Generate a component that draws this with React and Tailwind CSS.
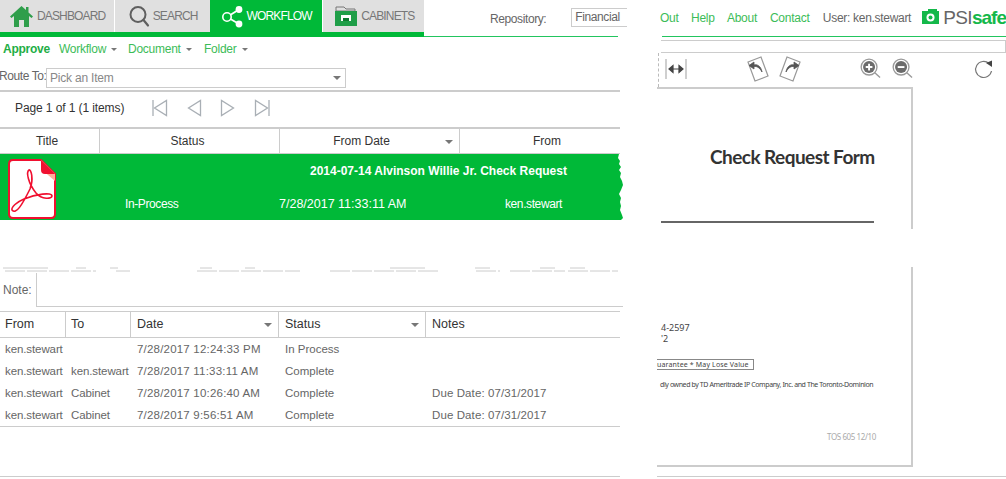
import React from "react";

const font = { sans: "font-['Liberation_Sans',Arial,sans-serif]" };

const HomeIcon = () => (
  <svg width="25" height="24" viewBox="0 0 25 24" className="shrink-0">
    <path d="M12.5 2 L1 12.5 L2.5 14 L5 12 V23 H10 V16 H15 V23 H20 V12 L22.5 14 L24 12.5 L19.5 8.5 V3 H17 V6 Z" fill="#2f9e4b" />
  </svg>
);

const SearchIcon = () => (
  <svg width="22" height="24" viewBox="0 0 22 24" className="shrink-0">
    <circle cx="10" cy="10.5" r="7.5" fill="none" stroke="#5f5f5f" strokeWidth="2" />
    <path d="M15.5 16 L20 21.5" stroke="#5f5f5f" strokeWidth="2.2" strokeLinecap="round" />
  </svg>
);

const ShareIcon = () => (
  <svg width="23" height="23" viewBox="0 0 23 23" className="shrink-0">
    <path d="M6 12 L18 4.5 M6 12 L18 19" stroke="#fff" strokeWidth="1.8" />
    <circle cx="6" cy="12" r="4.2" fill="#00b938" stroke="#fff" strokeWidth="1.6" />
    <circle cx="18" cy="4.5" r="3.4" fill="#fff" />
    <circle cx="18" cy="19" r="3.4" fill="#fff" />
  </svg>
);

const CabinetIcon = () => (
  <svg width="24" height="22" viewBox="0 0 24 22" className="shrink-0">
    <path d="M2 4 V2 H10 L12 4 H21 V6 H2 Z" fill="none" stroke="#777" strokeWidth="1" />
    <rect x="1" y="6" width="22" height="15" fill="#1f9e48" />
    <rect x="7" y="10" width="10" height="6" fill="#fff" />
    <rect x="9" y="13" width="6" height="3" fill="#0d7a30" />
  </svg>
);

const PdfIcon = () => (
  <svg width="48" height="60" viewBox="0 0 48 60" className="shrink-0">
    <path d="M5 1 H33 L47 15 V55 Q47 59 43 59 H5 Q1 59 1 55 V5 Q1 1 5 1 Z" fill="#fff" stroke="#f01030" strokeWidth="2" />
    <path d="M33 1 L47 15 L47 22 L33 10 Z" fill="#ffb09a" />
    <path d="M33 1 L47 15 H37 Q33 15 33 11 Z" fill="#f01030" />
    <path d="M4 51 C8 56 14 46 22 30 C26 20 23 10 21 11 C18 13 20 24 28 34 C34 41 44 40 44 37 C44 33 28 35 16 40 C9 43 3 48 4 51 Z" fill="none" stroke="#f01030" strokeWidth="1.6" />
  </svg>
);

const PagerIcon = ({ dir, bar }) => (
  <svg width="16" height="18" viewBox="0 0 16 18" fill="none" stroke="#a9afb5" strokeWidth="1.3" className="shrink-0">
    {dir === "left" ? <path d="M14.5 1.5 V16.5 L2.5 9 Z" /> : <path d="M1.5 1.5 V16.5 L13.5 9 Z" />}
    {bar && <path d={dir === "left" ? "M1 1 V17" : "M15 1 V17"} />}
  </svg>
);

const Caret = ({ className = "" }) => (
  <span className={`inline-block w-0 h-0 border-x-[4px] border-x-transparent border-t-[4px] border-t-[#777] ${className}`} />
);

const SmallCaret = () => (
  <span className="inline-block w-0 h-0 ml-[2px] mb-[2px] border-x-[3px] border-x-transparent border-t-[3px] border-t-[#777]" />
);

const RaggedEdge = () => (
  <svg width="8" height="66" viewBox="0 0 8 66" className="absolute left-full top-0">
    <path d="M0 0 H1 L0 4 L2 7 L1 10 L3 13 L1 16 L3 19 L2 23 L4 27 L5 31 L3 36 L1 40 L3 44 L2 48 L3 52 L2 56 L4 61 L5 64 L3 66 H0 Z" fill="#00b938" />
  </svg>
);

const ZoomIcon = ({ plus }) => (
  <svg width="21" height="21" viewBox="0 0 22 22" className="shrink-0">
    <circle cx="9.5" cy="9.5" r="8.3" fill="#fff" stroke="#999" strokeWidth="1.4" />
    <circle cx="9.5" cy="9.5" r="6.3" fill="#6b6b6b" />
    <path d={plus ? "M9.5 6 V13 M6 9.5 H13" : "M6 9.5 H13"} stroke="#fff" strokeWidth="2" />
    <path d="M15.5 15.5 L21 20.5" stroke="#999" strokeWidth="1.4" />
  </svg>
);

const RotatePage = ({ flip }) => (
  <svg width="22" height="26" viewBox="0 0 22 26" className={`shrink-0 ${flip ? "-scale-x-100" : ""}`}>
    <path d="M1 6 L14 1 L21 20 L8 25 Z" fill="#fff" stroke="#999" strokeWidth="1.2" />
    <path d="M15 16 C14 10 10 8 7 9 L7 6 L2 9.5 L7 13 L7 10.5 C10 10 13 12 15 16 Z" fill="#555" stroke="#555" strokeWidth="0.8" />
  </svg>
);

const Logo = () => (
  <div className="flex items-center ml-[11px]">
    <svg width="17" height="17" viewBox="0 0 17 17" className="shrink-0 mb-[3px]">
      <path d="M0 3 H6 V1 H15 V3 H17 V16 H0 Z" fill="#14b84a" />
      <circle cx="8.5" cy="9.5" r="4" fill="#fff" />
      <circle cx="8.5" cy="9.5" r="2" fill="#14b84a" />
    </svg>
    <span className="ml-[4px] text-[19px] leading-none tracking-[-0.6px] text-[#666] font-light mb-[2px]">PSI</span>
    <span className="text-[19px] leading-none tracking-[-1px] text-[#14b84a] font-bold mb-[2px]">safe</span>
  </div>
);

const historyRows = [
  ["ken.stewart", "", "7/28/2017 12:24:33 PM", "In Process", ""],
  ["ken.stewart", "ken.stewart", "7/28/2017 11:33:11 AM", "Complete", ""],
  ["ken.stewart", "Cabinet", "7/28/2017 10:26:40 AM", "Complete", "Due Date: 07/31/2017"],
  ["ken.stewart", "Cabinet", "7/28/2017 9:56:51 AM", "Complete", "Due Date: 07/31/2017"],
];

const historyCols = "grid grid-cols-[66px_65px_148px_147px_1fr]";

const App = () => {
  return (
    <div className={`${font.sans} flex w-[1006px] h-[479px] overflow-hidden bg-white text-[11.5px] text-[#666]`}>
      {/* left panel */}
      <div className="w-[627px] shrink-0 overflow-hidden">
        <div className="flex h-[37px]">
          <div className="flex w-[424px] h-[37px] border-b-[5px] border-[#00b938] text-[12px] tracking-[-0.85px]">
            <div className="w-[114px] bg-[#e0e0e0] flex items-center pl-[9px] gap-[3px] text-[#777]"><HomeIcon />DASHBOARD</div>
            <div className="w-[95px] ml-px bg-[#e0e0e0] flex items-center pl-[13px] gap-[3px] text-[#777]"><SearchIcon />SEARCH</div>
            <div className="w-[113px] bg-[#00b938] flex items-center pl-[11px] gap-[3px] text-white"><ShareIcon />WORKFLOW</div>
            <div className="w-[101px] ml-px bg-[#e0e0e0] flex items-center pl-[11px] gap-[3px] text-[#777]"><CabinetIcon />CABINETS</div>
          </div>
          <div className="w-[194px] h-[37px] border-b border-[#22c55e] flex items-start pt-[8px]">
            <span className="ml-[66px] mt-[2px] text-[12px] tracking-[-0.4px]">Repository:</span>
            <div className="ml-[25px] w-[60px] h-[19px] shrink-0 border border-[#ccc] pl-[3px] text-[12px] leading-[16px] tracking-[-0.4px]">Financial</div>
          </div>
        </div>

        <div className="flex items-center h-[24px] pl-[3px] text-[12px] tracking-[-0.25px] text-[#3cbc58]">
          <span className="font-bold text-[#1fae45] w-[56px]">Approve</span>
          <span className="w-[69px]">Workflow <SmallCaret /></span>
          <span className="w-[76px]">Document <SmallCaret /></span>
          <span>Folder <SmallCaret /></span>
        </div>

        <div className="flex items-end h-[31px] w-[620px] border-b-2 border-[#ccc] pb-[2px] text-[12px]">
          <span className="-ml-px w-[47px] shrink-0 tracking-[-0.4px] whitespace-nowrap pb-[3px]">Route To:</span>
          <div className="w-[300px] h-[20px] border border-[#ccc] flex items-center justify-between pl-[3px] pr-[4px] text-[#888] tracking-[-0.2px]">
            Pick an Item <Caret />
          </div>
        </div>

        <div className="flex items-center h-[35px] pb-[4px] pl-[15px] text-[12px] tracking-[-0.1px] text-[#333]">
          <span className="w-[137px]">Page 1 of 1 (1 items)</span>
          <div className="flex gap-[18px]">
            <PagerIcon dir="left" bar />
            <PagerIcon dir="left" />
            <PagerIcon dir="right" />
            <PagerIcon dir="right" bar />
          </div>
        </div>

        <div className="w-[620px] h-[27px] border-t-2 border-b border-[#ccc] grid grid-cols-[100px_180px_180px_1fr] text-[12px] text-[#333]">
          <div className="border-r border-[#ccc] flex items-center justify-center pr-[5px] pb-px">Title</div>
          <div className="border-r border-[#ccc] flex items-center justify-center pr-[4px] pb-px">Status</div>
          <div className="border-r border-[#ccc] flex items-center justify-center relative pr-[16px] pb-px">
            From Date <Caret className="absolute right-[6px] top-[11px]" />
          </div>
          <div className="flex items-center justify-center pl-[14px] pb-px">From</div>
        </div>

        <div className="relative w-[618px] h-[66px] bg-[#00b938] flex text-white text-[12px]">
          <div className="ml-[8px] mt-[5px]"><PdfIcon /></div>
          <div className="ml-[4px] flex flex-col">
            <div className="ml-[250px] mt-[8px] font-bold whitespace-nowrap">2014-07-14 Alvinson Willie Jr. Check Request</div>
            <div className="flex mt-[15px] whitespace-nowrap">
              <span className="ml-[65px] w-[154px] tracking-[-0.4px]">In-Process</span>
              <span className="w-[226px] text-[12.5px]">7/28/2017 11:33:11 AM</span>
              <span className="tracking-[-0.4px]">ken.stewart</span>
            </div>
          </div>
          <RaggedEdge />
        </div>

        <svg width="620" height="6" viewBox="0 0 620 6" className="block mt-[47px]">
          <path d="M3 1 H48 M76 1 H86 M110 1 H118 M200 1 H212 M245 1 H255 M390 1 H425 M475 1 H490 M540 1 H555 M570 1 H585" stroke="#ccc" strokeWidth="1" />
          <path d="M5 4 H96 M116 4 H130 M197 4 H300 M330 4 H438 M476 4 H500 M510 4 H565 M568 4 H618" stroke="#ccc" strokeWidth="1" strokeDasharray="20 2" />
        </svg>

        <div className="flex items-center w-[623px] h-[34px] text-[12px]">
          <span className="w-[36px] shrink-0 pl-[3px]">Note:</span>
          <div className="flex-1 h-[34px] border-l border-b border-[#ccc]" />
        </div>

        <div className={`${historyCols} w-[620px] h-[27px] mt-[4px] border-t border-b border-[#ccc] text-[12.5px] text-[#333]`}>
          <div className="border-r border-[#ccc] flex items-center pl-[5px]">From</div>
          <div className="border-r border-[#ccc] flex items-center pl-[5px]">To</div>
          <div className="border-r border-[#ccc] flex items-center justify-between pl-[6px] pr-[6px]">Date <Caret /></div>
          <div className="border-r border-[#ccc] flex items-center justify-between pl-[6px] pr-[6px]">Status <Caret /></div>
          <div className="flex items-center pl-[6px]">Notes</div>
        </div>

        <div className="w-[620px] pt-px border-b border-[#ccc] h-[89px]">
          {historyRows.map((row, i) => (
            <div key={i} className={`${historyCols} h-[22px] items-center whitespace-nowrap`}>
              <span className="pl-[5px] tracking-[-0.1px]">{row[0]}</span>
              <span className="pl-[5px] tracking-[-0.1px]">{row[1]}</span>
              <span className="pl-[6px] tracking-[0.2px]">{row[2]}</span>
              <span className="pl-[6px]">{row[3]}</span>
              <span className="pl-[6px] tracking-[0.1px]">{row[4]}</span>
            </div>
          ))}
        </div>

        <div className="w-[620px] mt-[49px] border-t border-[#ccc]" />
      </div>

      {/* right panel */}
      <div className="w-[349px] ml-[30px] shrink-0">
        <div className="h-[37px] ml-[5px] border-b border-[#22c55e] flex items-center text-[12px] tracking-[-0.25px] whitespace-nowrap">
          <span className="-ml-[2px] w-[31px] text-[#3cbc58]">Out</span>
          <span className="w-[36px] text-[#3cbc58]">Help</span>
          <span className="w-[43px] text-[#3cbc58]">About</span>
          <span className="w-[53px] text-[#3cbc58]">Contact</span>
          <span className="tracking-[-0.3px]">User: ken.stewart</span>
          <Logo />
        </div>

        <div className="h-[13px] ml-[4px] mt-[3px] border-t border-r border-b border-[#ccc] w-[345px]" />

        <div className="h-[34px] pb-[3px] ml-px border-l border-dashed border-[#bbb] flex items-center">
          <svg width="24" height="22" viewBox="0 0 24 22" className="ml-[5px] shrink-0">
            <path d="M2 1 V21 M22 1 V21" stroke="#bbb" strokeWidth="1.4" />
            <path d="M5 11 H19 M5 11 L9 7.5 V14.5 Z M19 11 L15 7.5 V14.5 Z" stroke="#444" strokeWidth="1.2" fill="#444" />
          </svg>
          <div className="ml-[59px]"><RotatePage /></div>
          <div className="ml-[10px]"><RotatePage flip /></div>
          <div className="ml-[59px]"><ZoomIcon plus /></div>
          <div className="ml-[11px]"><ZoomIcon /></div>
          <svg width="20" height="20" viewBox="0 0 20 20" fill="none" className="ml-[61px] shrink-0">
            <path d="M15 4.5 A8 8 0 1 0 17.5 12" stroke="#777" strokeWidth="1.2" />
            <path d="M12 4 L18 1.5 L18 8 Z" fill="#444" />
          </svg>
        </div>

        <div className="w-[256px] h-[142px] border-t-2 border-r-2 border-[#ccc] flex flex-col items-end">
          <div className="w-[164px] mr-[37px] mt-[56px] font-['Lato',sans-serif] font-bold text-[19px] leading-[24px] tracking-[-0.55px] text-[#333] whitespace-nowrap">
            Check Request Form
          </div>
          <div className="w-[213px] mr-[37px] mt-[52px] h-[2px] bg-[#666]" />
        </div>
        <div className="w-[256px] h-[38px]" />
        <div className="w-[256px] h-[200px] border-r-2 border-b-2 border-[#ccc] font-['Noto_Sans',sans-serif] text-[#444]">
          <div className="pl-[4px] pt-[55px] text-[9px] leading-[11px]">
            <div>4-2597</div>
            <div>&apos;2</div>
          </div>
          <div className="mt-[15px] w-[97px] h-[11px] border border-[#888] border-l-0 text-[7px] leading-[9px] tracking-[0.15px] whitespace-nowrap">
            uarantee * May Lose Value
          </div>
          <div className="mt-[10px] pl-[3px] text-[7px] leading-[10px] tracking-[-0.4px] whitespace-nowrap">
            dly owned by TD Ameritrade IP Company, Inc. and The Toronto-Dominion
          </div>
          <div className="mt-[42px] pl-[170px] text-[8px] leading-[10px] tracking-[-0.4px] text-[#aaa] whitespace-nowrap">
            TOS 605 12/10
          </div>
        </div>
        <div className="mt-[9px] border-t border-[#ccc]" />
      </div>
    </div>
  );
};

export default App;
